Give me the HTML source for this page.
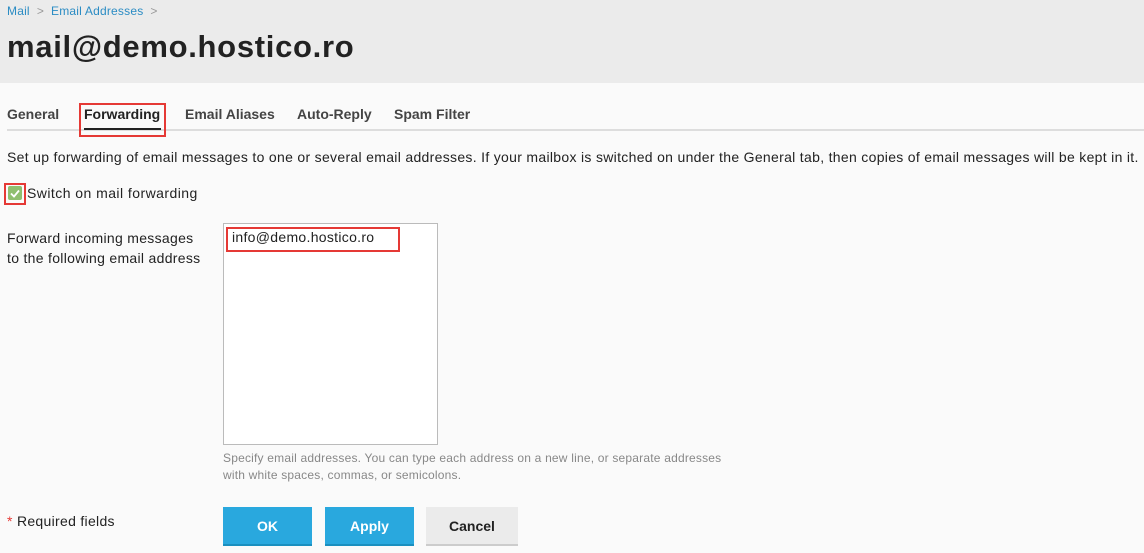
<!DOCTYPE html>
<html><head><style>
body{margin:0;width:1144px;height:553px;background:#fafafa;font-family:"Liberation Sans",sans-serif;color:#222;position:relative;overflow:hidden}
.a{position:absolute;white-space:nowrap}
.hdr{position:absolute;left:0;top:0;width:1144px;height:83px;background:#ebebeb}
.bc{font-size:12px;color:#2b8cc4;top:4px;left:7px;letter-spacing:0.2px}
.bc span{color:#999;margin:0 7px}
h1{position:absolute;margin:0;left:7px;top:29px;font-size:31px;font-weight:bold;color:#222;letter-spacing:0.7px}
.tab{top:106px;font-size:14px;font-weight:bold;color:#444}
.btn{position:absolute;top:507px;height:37px;border-bottom:2px solid #1a8fbf;background:#29a8de;color:#fff;font-size:14px;font-weight:bold;text-align:center;line-height:38px}
.red{position:absolute;border:2px solid #e53935}
</style></head><body>
<div class="hdr"></div>
<div class="a bc">Mail<span>&gt;</span>Email Addresses<span>&gt;</span></div>
<h1>mail@demo.hostico.ro</h1>
<div class="a" style="left:7px;top:129px;width:1137px;height:2px;background:#ddd"></div>
<div class="a tab" style="left:7px">General</div>
<div class="a tab" style="left:84px;color:#222">Forwarding</div>
<div class="a" style="left:84px;top:128px;width:77px;height:2px;background:#222"></div>
<div class="red" style="left:79px;top:103px;width:83px;height:30px"></div>
<div class="a tab" style="left:185px">Email Aliases</div>
<div class="a tab" style="left:297px">Auto-Reply</div>
<div class="a tab" style="left:394px">Spam Filter</div>
<div class="a" style="left:7px;top:149px;font-size:14px;letter-spacing:0.31px">Set up forwarding of email messages to one or several email addresses. If your mailbox is switched on under the General tab, then copies of email messages will be kept in it.</div>
<div class="a" style="left:8px;top:186px;width:14px;height:14px;background:#8fbf6f;border-radius:2px"><svg width="14" height="14"><path d="M3 7.5l3 3 5-6" stroke="#fff" stroke-width="1.8" fill="none"/></svg></div>
<div class="red" style="left:4px;top:183px;width:18px;height:18px"></div>
<div class="a" style="left:27px;top:185px;font-size:14px;letter-spacing:0.45px">Switch on mail forwarding</div>
<div class="a" style="left:7px;top:228px;font-size:14px;line-height:20px;letter-spacing:0.3px">Forward incoming messages<br>to the following email address</div>
<div class="a" style="left:223px;top:223px;width:213px;height:220px;background:#fff;border:1px solid #bbb"></div>
<div class="a" style="left:232px;top:229px;font-size:14px;letter-spacing:0.3px">info@demo.hostico.ro</div>
<div class="red" style="left:226px;top:227px;width:170px;height:21px"></div>
<div class="a" style="left:223px;top:450px;font-size:12px;color:#888;line-height:17px;letter-spacing:0.2px">Specify email addresses. You can type each address on a new line, or separate addresses<br>with white spaces, commas, or semicolons.</div>
<div class="a" style="left:7px;top:513px;font-size:14px;letter-spacing:0.3px"><span style="color:#e53935">*</span> Required fields</div>
<div class="btn" style="left:223px;width:89px">OK</div>
<div class="btn" style="left:325px;width:89px">Apply</div>
<div class="btn" style="left:426px;width:92px;background:#ebebeb;color:#222;border-bottom-color:#ccc">Cancel</div>
</body></html>
